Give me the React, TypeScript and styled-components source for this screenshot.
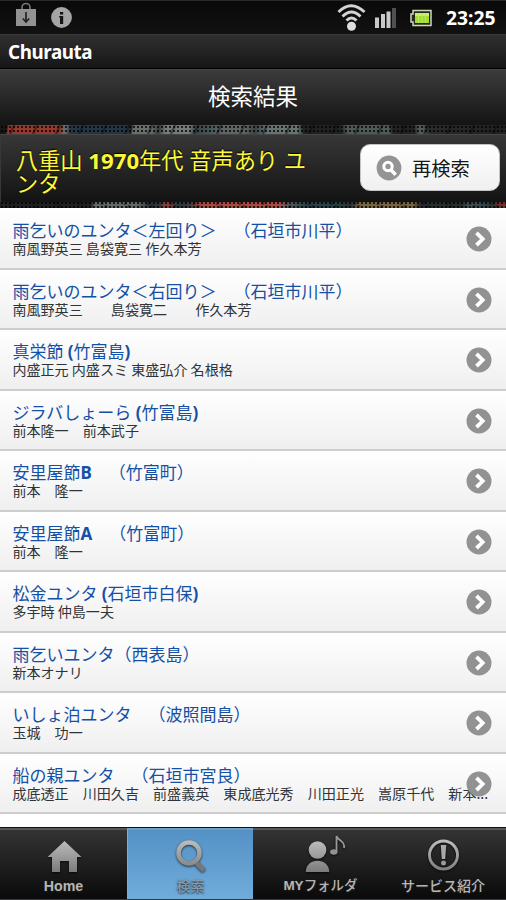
import React from 'react';
import styled, { createGlobalStyle } from 'styled-components';

const GlobalStyle = createGlobalStyle`
  * { box-sizing: border-box; }
  html, body { margin: 0; padding: 0; background: #fff; }
  body { font-family: "Noto Sans CJK JP", sans-serif; text-spacing-trim: space-all; }
`;

const Screen = styled.div`
  width: 506px;
  height: 900px;
  display: flex;
  flex-direction: column;
  overflow: hidden;
  background: #fff;
`;

const StatusBar = styled.div`
  height: 34px;
  flex: none;
  display: flex;
  justify-content: space-between;
  padding: 0 8px 0 16px;
  border-top: 1px solid #292929;
  background: linear-gradient(#090909, #121212);
`;

const StatusGroup = styled.div`
  display: flex;
  height: 33px;
`;

const Clock = styled.span`
  width: 52px;
  margin-left: 13px;
  font: 700 19.3px/33px "Noto Sans", sans-serif;
  color: #fff;
  white-space: nowrap;
`;

const AppTitle = styled.div`
  height: 35px;
  flex: none;
  padding-left: 8px;
  border-top: 1px solid #383838;
  border-bottom: 1px solid #000;
  background: linear-gradient(#303030, #161616);
  color: #fff;
  font: 700 18.8px/34px "Noto Sans", sans-serif;
  letter-spacing: -0.4px;
`;

const PageHeader = styled.h1`
  height: 56px;
  flex: none;
  margin: 0;
  border-top: 1px solid #444;
  background: linear-gradient(#3c3c3c, #151515 96%);
  color: #fff;
  font-size: 22.5px;
  font-weight: 400;
  line-height: 50px;
  text-align: center;
`;

const PatternBand = styled.div`
  flex: none;
  height: 83px;
  padding: 9px 0 6px;
  background:
    radial-gradient(circle, rgba(0, 0, 0, 0.75) 0.9px, transparent 1.4px) 0 0 / 4px 4px,
    linear-gradient(115deg, transparent 45%, rgba(10, 12, 12, 0.6) 50%, transparent 60%) 0 0 / 23px 10px,
    linear-gradient(100deg, #171717 0 7px, #97382c 9px 61px, #64686a 63px 66px, #263544 70px 127px, #222 130px, #696d6c 132px 150px, #353a3a 157px, #747b79 164px 187px, #394143 193px, #4a595c 210px, #5f6563 220px 242px, #394143 252px, #667371 264px 298px) 0 0 / 298px 10px no-repeat,
    linear-gradient(80deg, #4f5a58 0 3px, #202222 6px 43px, #4f5a58 50px 90px, #202222 94px 115px, #545a59 120px 124px, #292b2b 130px, #202020 100%) 298px 0 / 208px 10px no-repeat,
    linear-gradient(100deg, #202020 0 90px, #626967 94px 135px, #303437 148px 158px, #863c38 162px 168px, #2d393c 174px 184px, #a64a42 200px 276px, #595e5c 284px, #294247 300px 330px, #263135 346px, #78653e 354px 407px, #292c2c 414px 455px, #42565d 463px, #29363a 484px, #752f2d 494px) 0 77px / 506px 6px no-repeat,
    #222;
`;

const SearchBar = styled.section`
  height: 68px;
  display: flex;
  justify-content: space-between;
  align-items: flex-start;
  padding: 10px 6px 0 15px;
  border-top: 1px solid #454545;
  border-left: 1px solid #383838;
  background: linear-gradient(#373737, #131313);
`;

const Query = styled.div`
  width: 305px;
  padding-top: 3px;
  color: #fff838;
  font-size: 22.2px;
  line-height: 22.5px;
  text-shadow: 0 -1px 1px #000;
`;

const Bold = styled.b`
  font-family: "Noto Sans", sans-serif;
  font-weight: 700;
  line-height: 0;
`;

const SearchButton = styled.button`
  width: 140px;
  height: 47px;
  margin: -1px 0 0;
  display: flex;
  align-items: center;
  gap: 10px;
  padding: 0 0 0 15px;
  border: 1px solid #c4c4c4;
  border-radius: 10px;
  background: linear-gradient(#fff, #f0f0f0);
  color: #161616;
  font: 400 19.3px/44px "Noto Sans CJK JP", sans-serif;
  text-shadow: 0 1px 0 #fff;
`;

const List = styled.ul`
  height: 619px;
  flex: none;
  margin: 0;
  padding: 1px 0 0;
  list-style: none;
  background: #fff;
`;

const Row = styled.li`
  position: relative;
  height: 60.5px;
  padding: 11px 0 0 12.4px;
  border-bottom: 2px solid #cdcdcd;
  background: linear-gradient(#fff, #efefef);
`;

const SongTitle = styled.div`
  height: 19px;
  color: #1450a5;
  font-size: 17px;
  line-height: 19px;
  white-space: pre;
`;

const Artists = styled.div`
  width: 476px;
  overflow: hidden;
  color: #303438;
  font-size: 14.07px;
  line-height: 18px;
  white-space: pre;
`;

const ArrowBadge = styled.svg`
  position: absolute;
  top: 17px;
  right: 14px;
  width: 26px;
  height: 26px;
`;

const TabBar = styled.nav`
  height: 73px;
  flex: none;
  display: grid;
  grid-template-columns: 127px 126px 127px 126px;
  border-top: 1px solid #111;
  border-bottom: 1px solid #39393b;
  background: linear-gradient(#353535, #0a0a0a);
`;

const Tab = styled.div<{ $active?: boolean }>`
  display: flex;
  flex-direction: column;
  align-items: center;
  height: 71px;
  border-top: 2px solid ${p => (p.$active ? '#6d9fc9' : '#565656')};
  border-left: ${p => (p.$active ? '1px solid #75afdd' : '0')};
  background: ${p => (p.$active ? 'linear-gradient(#5491c5, #70acdb)' : 'transparent')};
  color: ${p => (p.$active ? '#819aac' : '#b5b5b5')};
`;

const TabLabel = styled.span<{ $size: number; $indent?: number }>`
  font: 500 ${p => p.$size}px/20px "Liberation Sans", "Noto Sans CJK JP", sans-serif;
  margin-top: -2px;
  padding-left: ${p => p.$indent || 0}px;
  white-space: nowrap;
  text-shadow: 0 1px 2px #222;
  b { font-family: "Liberation Sans", sans-serif; }
`;

const TabIcon = styled.svg`
  width: 60px;
  height: 48px;
  flex: none;
  filter: drop-shadow(0 1px 1px rgba(0, 0, 0, 0.7));
`;

const songs = [
  ['雨乞いのユンタ＜左回り＞　（石垣市川平）', '南風野英三 島袋寛三 作久本芳'],
  ['雨乞いのユンタ＜右回り＞　（石垣市川平）', '南風野英三　　島袋寛二　　作久本芳'],
  ['真栄節 (竹富島)', '内盛正元 内盛スミ 東盛弘介 名根格'],
  ['ジラバしょーら (竹富島)', '前本隆一　前本武子'],
  ['安里屋節B　（竹富町）', '前本　隆一'],
  ['安里屋節A　（竹富町）', '前本　隆一'],
  ['松金ユンタ (石垣市白保)', '多宇時 仲島一夫'],
  ['雨乞いユンタ（西表島）', '新本オナリ'],
  ['いしょ泊ユンタ　（波照間島）', '玉城　功一'],
  ['船の親ユンタ　（石垣市宮良）', '成底透正　川田久吉　前盛義英　東成底光秀　川田正光　嵩原千代　新本...'],
];

/* Latin letters, digits and ASCII punctuation are set in the bold face. */
const Mixed = ({ text }: { text: string }) => (
  <>
    {text.split(/([\x20-\x7e]+)/).map((part, i) => (i % 2 ? <Bold key={i}>{part}</Bold> : part))}
  </>
);

const MarketIcon = () => (
  <svg width="20" height="33" viewBox="0 0 20 33">
    <path d="M6 8V6.500a4 4 0 0 1 8 0V8" fill="none" stroke="#777" strokeWidth="1.6" />
    <path d="M0 8h20v17H0z" fill="#929292" />
    <path d="M10 11v10M6.800 17.500 10 21l3.200-3.500" fill="none" stroke="#222" strokeWidth="1.7" />
  </svg>
);

const InfoIcon = () => (
  <svg width="22" height="33" viewBox="0 0 22 33">
    <circle cx="10.500" cy="16.500" r="10.400" fill="#a5a5a5" />
    <path d="M9 11h3.200v2.500H9zM8.200 15h4v8H9v-6.400h-.8z" fill="#151515" />
  </svg>
);

const InfoSlot = styled.span`
  margin-left: 15px;
  height: 33px;
`;

const WifiIcon = () => (
  <svg width="30" height="33" viewBox="0 0 30 33">
    <g fill="none" stroke="#d3d3d3" strokeWidth="3">
      <path d="M1.500 11Q14 -1.500 27.500 11" />
      <path d="M5.500 15.500Q14.500 6.500 23.500 15.500" />
      <path d="M9.500 19.500Q14.500 14.500 19.500 19.500" />
    </g>
    <circle cx="14.500" cy="25.300" r="4.500" fill="#dedede" />
  </svg>
);

const SignalIcon = () => (
  <svg width="24" height="33" viewBox="0 0 24 33">
    <path d="M0 16.500h4V27H0zM6 13h4v14H6zM11.500 10.500h4V27h-4z" fill="#c9c9c9" />
    <path d="M17 7h4v20h-4z" fill="#505050" />
  </svg>
);

const BatteryIcon = () => (
  <svg width="23" height="33" viewBox="0 0 23 33">
    <path d="M3 9.500h18v15H3v-3.500H1v-8h2z" fill="#222c14" stroke="#d0d5bd" strokeWidth="1.500" />
    <path d="M5 12h14v10H5z" fill="#a5db35" />
    <path d="M5 12h14v3H5z" fill="#c9f07c" />
    <path d="M8.500 12v10M12 12v10M15.500 12v10" stroke="#bae858" strokeWidth="1" />
  </svg>
);

const StatusIcons = styled.div`
  display: flex;
  gap: 8px;
  & > svg:nth-child(3) { margin-left: 3px; }
`;

const SearchGlyph = () => (
  <svg width="26" height="26" viewBox="0 0 26 26">
    <circle cx="13" cy="13" r="12.400" fill="#949494" />
    <circle cx="12" cy="11.500" r="4.200" fill="none" stroke="#fff" strokeWidth="3" />
    <path d="m15 15 4.700 4.700" stroke="#fff" strokeWidth="3.400" />
  </svg>
);

const Arrow = () => (
  <ArrowBadge viewBox="0 0 26 26">
    <circle cx="13" cy="13" r="12.500" fill="#929292" />
    <path d="m10.500 6.800 6.200 6.200-6.200 6.200" fill="none" stroke="#fff" strokeWidth="3.800" />
  </ArrowBadge>
);

const IconFill = () => (
  <defs>
    <linearGradient id="metal" gradientUnits="userSpaceOnUse" x1="0" y1="8" x2="0" y2="44">
      <stop offset="0" stopColor="#c2c2c2" />
      <stop offset="1" stopColor="#777" />
    </linearGradient>
  </defs>
);

export default function App() {
  return (
    <>
      <GlobalStyle />
      <Screen>
        <StatusBar>
          <StatusGroup>
            <MarketIcon />
            <InfoSlot><InfoIcon /></InfoSlot>
          </StatusGroup>
          <StatusGroup>
            <StatusIcons>
              <WifiIcon />
              <SignalIcon />
              <BatteryIcon />
            </StatusIcons>
            <Clock>23:25</Clock>
          </StatusGroup>
        </StatusBar>
        <AppTitle>Churauta</AppTitle>
        <PageHeader>検索結果</PageHeader>
        <PatternBand>
          <SearchBar>
            <Query>
              <Mixed text="八重山 1970年代 音声あり ユ" /><br />ンタ
            </Query>
            <SearchButton><SearchGlyph />再検索</SearchButton>
          </SearchBar>
        </PatternBand>
        <List>
          {songs.map(([title, artists]) => (
            <Row key={title}>
              <SongTitle><Mixed text={title} /></SongTitle>
              <Arrow />
              <Artists>{artists}</Artists>
            </Row>
          ))}
        </List>
        <TabBar>
          <Tab>
            <TabIcon viewBox="0 0 60 48">
              <IconFill />
              <path d="m30.500 11 17 16h-4.500v15h-8V31h-9v11h-8V27h-4.500z" fill="url(#metal)" />
            </TabIcon>
            <TabLabel $size={14.2}><b>Home</b></TabLabel>
          </Tab>
          <Tab $active>
            <TabIcon viewBox="0 0 60 48">
              <circle cx="28" cy="23" r="10.500" fill="none" stroke="url(#metal)" strokeWidth="4.500" />
              <path d="m35.500 33 7.500 7.500" stroke="#777" strokeWidth="5" />
            </TabIcon>
            <TabLabel $size={14}>検索</TabLabel>
          </Tab>
          <Tab>
            <TabIcon viewBox="0 0 60 48">
              <circle cx="30.500" cy="20" r="8.800" fill="url(#metal)" />
              <path d="M18.800 42c0-15 23.400-15 23.400 0z" fill="url(#metal)" />
              <path d="M49.500 22V6c1 5 9 4.500 7.500 12" fill="none" stroke="#999" strokeWidth="1.800" />
              <ellipse cx="46.800" cy="22" rx="3.700" ry="2.700" fill="#929292" />
            </TabIcon>
            <TabLabel $size={13.5} $indent={8}><b>MY</b>フォルダ</TabLabel>
          </Tab>
          <Tab>
            <TabIcon viewBox="0 0 60 48">
              <circle cx="30.500" cy="25" r="14" fill="none" stroke="url(#metal)" strokeWidth="2.900" />
              <path d="M27.800 15h5.400l-1 14h-3.400z" fill="#aaa" />
              <circle cx="30.500" cy="33" r="2.500" fill="#999" />
            </TabIcon>
            <TabLabel $size={14}>サービス紹介</TabLabel>
          </Tab>
        </TabBar>
      </Screen>
    </>
  );
}
